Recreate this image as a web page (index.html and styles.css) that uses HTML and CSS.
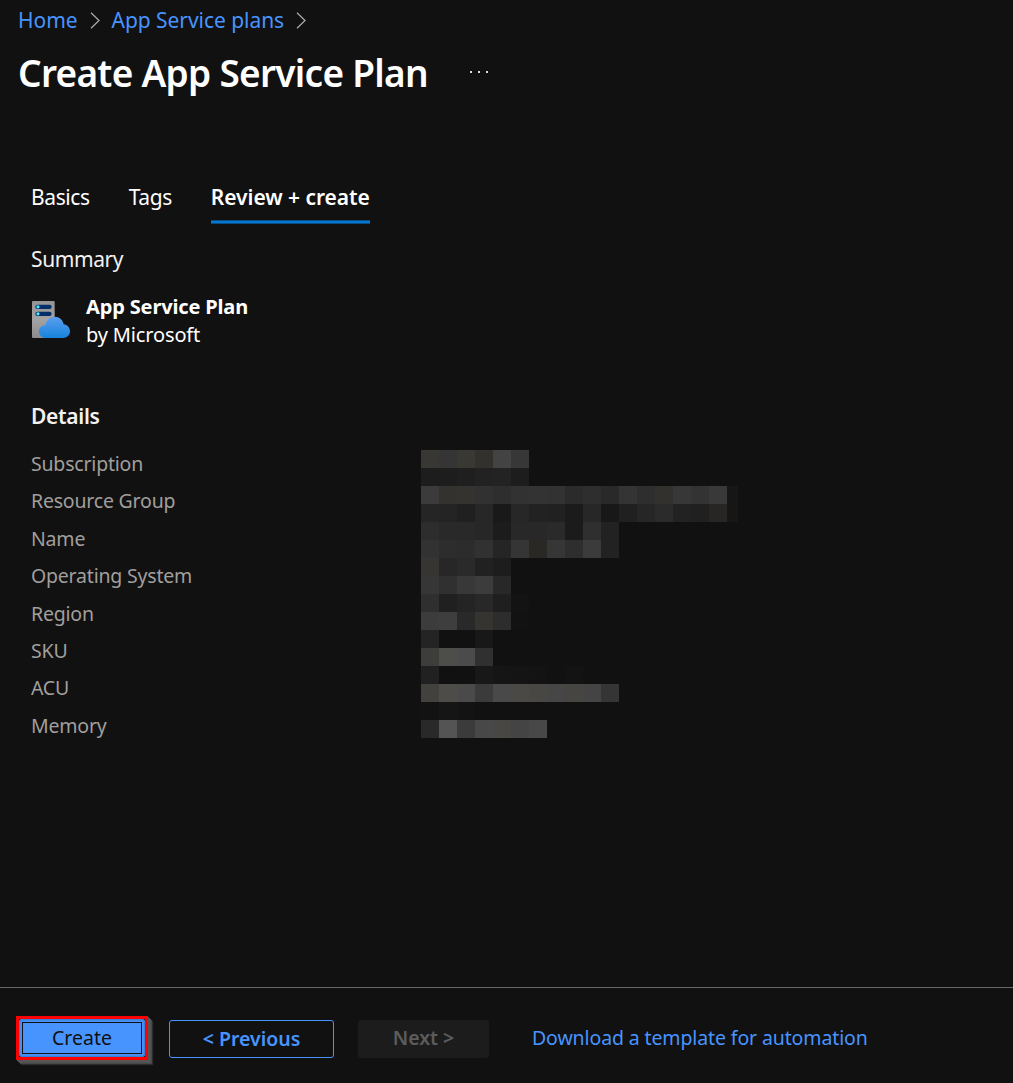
FILE: index.html
```html
<!DOCTYPE html>
<html lang="en">
<head>
<meta charset="utf-8">
<title>Create App Service Plan</title>
<link rel="stylesheet" href="styles.css">
</head>
<body>
<nav class="crumbs">
  <a>Home</a>
  <svg class="chevron" width="10" height="17" viewBox="0 0 10 17"><path d="M1 .8 9 8.5 1 16.2"/></svg>
  <a>App Service plans</a>
  <svg class="chevron" width="10" height="17" viewBox="0 0 10 17"><path d="M1 .8 9 8.5 1 16.2"/></svg>
</nav>
<header class="heading">
  <h1>Create App Service Plan</h1>
  <svg class="more" width="18" height="2" viewBox="0 0 18 2"><path d="M0 0h2v2H0zM8 0h2v2H8zM16 0h2v2h-2z"/></svg>
</header>
<main class="content">
  <div class="tabs">
    <span class="tab">Basics</span>
    <span class="tab">Tags</span>
    <span class="tab active">Review + create</span>
  </div>
  <div class="summary">Summary</div>
  <section class="product">
    <svg class="product-icon" width="38" height="37" viewBox="36 33 114 111">
      <defs>
        <linearGradient id="server" x1="0" y1="0" x2="0" y2="1"><stop offset="0" stop-color="#949494"/><stop offset=".5" stop-color="#a3a3a3"/><stop offset="1" stop-color="#8c8c8c"/></linearGradient>
        <linearGradient id="cloud" x1="0" y1="0" x2="0" y2="1"><stop offset="0" stop-color="#5b9ff0"/><stop offset="1" stop-color="#1683dc"/></linearGradient>
      </defs>
      <rect x="36" y="33" width="68" height="111" rx="3" fill="url(#server)"/>
      <rect x="46" y="44" width="49" height="13" rx="6.5" fill="#003067"/>
      <rect x="46" y="65" width="49" height="13" rx="6.5" fill="#003067"/>
      <circle cx="54" cy="50.5" r="4.8" fill="#50e6ff"/>
      <circle cx="54" cy="71.5" r="4.8" fill="#50e6ff"/>
      <path d="M77 144a19 19 0 0 1-20-19c0-11 8-19 19-20 3-14 14-25 28-25 14 0 25 10 27 23 11 1 19 10 19 21 0 12-9 20-21 20z" fill="url(#cloud)"/>
    </svg>
    <div class="product-text"><b>App Service Plan</b><span>by Microsoft</span></div>
  </section>
  <h2>Details</h2>
  <section class="details">
    <div class="labels">
      <span>Subscription</span><span>Resource Group</span><span>Name</span><span>Operating System</span>
      <span>Region</span><span>SKU</span><span>ACU</span><span>Memory</span>
    </div>
    <svg class="redacted" id="redacted" width="317" height="288" viewBox="0 0 317 288" shape-rendering="crispEdges"></svg>
  </section>
</main>
<footer class="actions">
  <span class="callout"><button class="btn create">Create</button></span>
  <button class="btn previous">&lt; Previous</button>
  <button class="btn next" disabled>Next &gt;</button>
  <a class="download">Download a template for automation</a>
</footer>
<script src="redacted.js"></script>
</body>
</html>
```
FILE: redacted.js
```js
// Colours of the mosaic blocks that hide the values, one string per row.
const rows = [
  "383733 353535 393833 32312d 434343 373737",
  "1d1d1d 1d1d1d 1f1f1f 222222 232323 1d1d1d",
  "3b3b3b 33322f 34332f 313131 2e2e2e 323232 333333 323232 2b2b2b 2e2e2e 292929 343434 2e2e2e 32312d 373737 333333 393939 161616",
  "252525 242424 202020 272727 191919 272727 222222 212121 1b1b1b 272727 181818 202020 262626 2b2b2b 222222 202020 272624 161616",
  "2d2d2d 292929 292929 272727 1c1c1c 282828 282828 2a2a2a 1b1b1b 2f2f2f 222222",
  "323232 2d2d2d 2c2c2c 313131 252525 353535 292825 363636 2e2e2e 3b3b3b 222222",
  "363531 272727 2a2a2a 212121 1d1d1d",
  "363636 303030 383838 3c3c3c 282828",
  "2f2f2f 202020 242424 282828 1f1f1f 131313",
  "3c3c3c 3e3e3e 292929 353430 2d2d2d 121212",
  "242424 111111 111111 181818",
  "3d3d3b 4d4d49 4b4b4b 303030",
  "212121 111111 111111 181818 151515 141414 131313 111111 131313",
  "42413e 4d4c49 4a4a4a 3b3b3b 494949 4a4946 484743 464646 464542 444444 353535",
  "121212 151515 131313",
  "292929 545454 3b3b3b 484848 484743 444444 484848"
];
document.getElementById("redacted").innerHTML = rows.map((row, y) =>
  row.split(" ").map((c, x) =>
    `<rect x="${x * 18}" y="${y * 18}" width="18" height="18" fill="#${c}"/>`
  ).join("")
).join("");
```
FILE: styles.css
```css
* { box-sizing: border-box; }
body {
  margin: 0;
  height: 1083px;
  display: flex;
  flex-direction: column;
  background: #111;
  color: #fff;
  font-family: "Noto Sans", "Open Sans", sans-serif;
  white-space: nowrap;
  overflow: hidden;
}
h1, h2 { margin: 0; font-weight: 600; }
svg { display: block; flex: none; }

.crumbs {
  display: flex;
  align-items: center;
  height: 40px;
  padding-left: 18px;
  font-size: 21px;
  line-height: 40px;
  letter-spacing: -0.05px;
  color: #4894fe;
}
.chevron { margin: 0 12px; fill: none; stroke: #a8a8a8; stroke-width: 1.3; }

.heading { display: flex; align-items: center; height: 64px; padding-left: 18px; }
.heading h1 { width: 452px; padding-top: 2px; font-size: 37px; line-height: 64px; letter-spacing: -0.72px; }
.more { fill: #ddd; }

.content { flex: 1; padding: 78px 31px 0; }
.tabs { display: flex; gap: 39px; font-size: 21px; line-height: 30px; }
.tab { height: 42px; letter-spacing: -0.4px; }
.active {
  font-weight: 600;
  letter-spacing: -0.05px;
  background: linear-gradient(#0b4b7d 1px, #0078d4 1px 3px, #0b4b7d 3px) 0 100% / 100% 4px no-repeat;
}
.summary { margin-top: 20px; font-size: 21px; line-height: 30px; letter-spacing: -0.4px; color: #f3f2f1; }

.product { display: flex; margin-top: 19px; font-size: 20px; line-height: 28px; }
.product-icon { margin: 8px 16px 0 1px; }
.product-text { display: flex; flex-direction: column; letter-spacing: -0.15px; }

h2 { margin-top: 52px; font-size: 21px; line-height: 30px; letter-spacing: -0.3px; color: #f3f2f1; }
.details { display: grid; grid-template-columns: 390px auto; justify-content: start; margin-top: 14px; }
.labels { display: grid; grid-auto-rows: 37.4px; font-size: 19.5px; line-height: 37.4px; letter-spacing: -0.2px; color: #a19f9d; }
.redacted { margin-top: 5px; }

.actions {
  display: flex;
  align-items: center;
  height: 96px;
  padding: 6px 0 0 16px;
  border-top: 1px solid #666;
  font-size: 20px;
}
.btn {
  height: 38px;
  padding: 0;
  border: 0;
  border-radius: 3px;
  font: 600 19.5px/36px "Noto Sans", "Open Sans", sans-serif;
}
.callout {
  display: flex;
  margin-top: -2px;
  border: 3px solid #f00;
  box-shadow: 1px 1px #555, 2px 2px #555, 3px 3px #505050, 4px 4px #484848, 5px 5px 1px #2c2c2c;
}
.create {
  width: 126px;
  color: #111;
  background: #4894fe;
  font-weight: 400;
  box-shadow: inset 0 0 2px 1px #3975c8;
  outline: 1px solid #111;
  outline-offset: -4px;
}
.previous { width: 165px; margin-left: 21px; padding-bottom: 2px; border: 1px solid #4894fe; background: none; color: #4894fe; }
.next { width: 131px; margin-left: 24px; padding-bottom: 2px; background: #1c1c1c; color: #5c5c5c; }
.download { margin: -2px 0 0 43px; font-size: 19.5px; letter-spacing: -0.12px; color: #4894fe; }
```
